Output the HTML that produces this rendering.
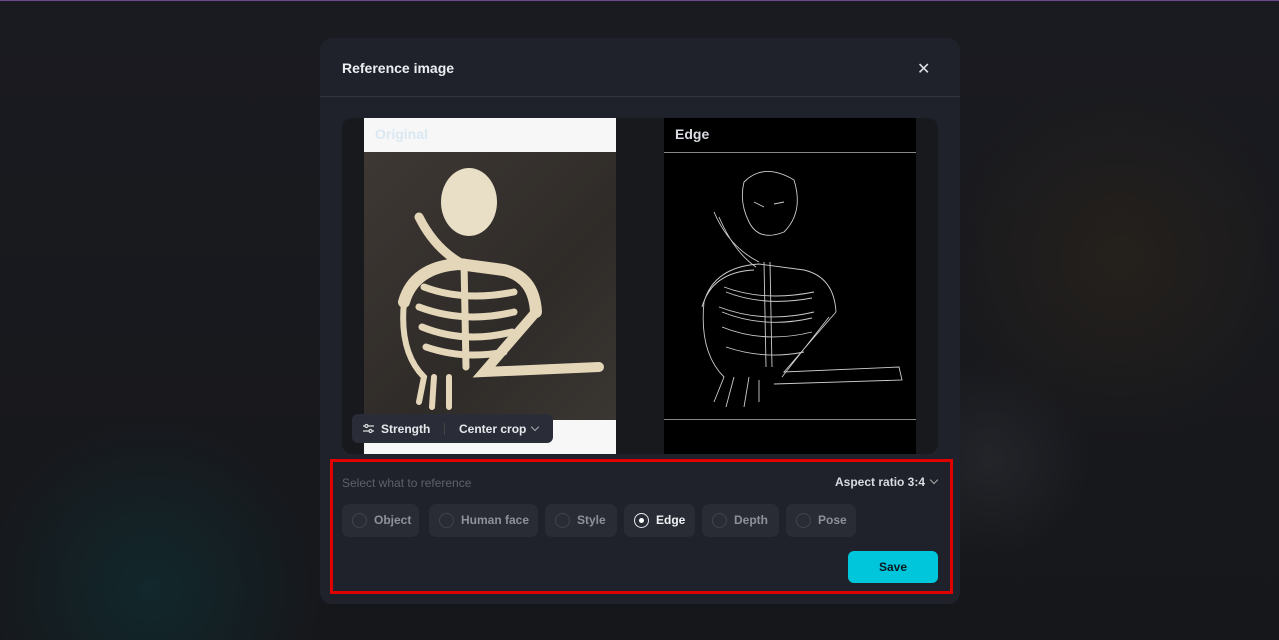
<!DOCTYPE html>
<html><head><style>
*{margin:0;padding:0;box-sizing:border-box}
body{width:1279px;height:640px;overflow:hidden;background:#15161b;font-family:"Liberation Sans",sans-serif;position:relative}
.bg{position:absolute;inset:0;background:radial-gradient(circle at 150px 590px,rgba(16,44,48,.8) 0,rgba(17,50,54,0) 170px),radial-gradient(circle at 1120px 260px,rgba(40,34,27,.8) 0,rgba(43,36,28,0) 180px),radial-gradient(circle at 990px 460px,rgba(40,42,47,.7) 0,rgba(42,44,49,0) 100px),linear-gradient(#1a1b20,#16171b)}
.top{position:absolute;left:0;top:0;width:1279px;height:1px;background:#6a4a8a}
.modal{position:absolute;left:320px;top:38px;width:640px;height:566px;background:#1f222a;border-radius:12px}
.title{position:absolute;left:22px;top:22px;color:#eceef2;font-size:14px;font-weight:bold}
.close{position:absolute;left:597px;top:21px;color:#dfe2e8;font-size:16px}
.hr{position:absolute;left:0;top:58px;width:640px;height:1px;background:#33363f}
.imgs{position:absolute;left:22px;top:80px;width:596px;height:336px;background:#18191d;border-radius:10px;overflow:hidden}
.l{position:absolute;left:22px;top:0;width:252px;height:336px;background:#f7f7f7}
.photo{position:absolute;left:0;top:34px;width:252px;height:268px;background:linear-gradient(135deg,#3e3834,#2f2b28 60%,#3a3632)}
.r{position:absolute;left:322px;top:0;width:252px;height:336px;background:#000}
.lab{position:absolute;left:11px;top:8px;font-size:14px;font-weight:bold}
.pill{position:absolute;left:10px;top:296px;width:201px;height:29px;background:#2a2d37;border-radius:6px;color:#e6e8ec;font-size:12px;font-weight:bold}
.red{position:absolute;left:10px;top:421px;width:623px;height:135px;border:3px solid #e00000}
.chip{position:absolute;top:466px;height:33px;background:#292c35;border-radius:7px;color:#8d919b;font-size:12px;font-weight:bold;line-height:33px;padding-left:32px;white-space:nowrap}
.chip i{position:absolute;left:10px;top:9px;width:15px;height:15px;border:1px solid #40444d;border-radius:50%}
.save{position:absolute;left:528px;top:513px;width:90px;height:32px;background:#00c6dc;border-radius:6px;color:#0b1a20;font-size:12px;font-weight:bold;text-align:center;line-height:32px}
.chev{display:inline-block;width:6px;height:6px;border-right:1.3px solid #aaa;border-bottom:1.3px solid #aaa;transform:rotate(45deg);margin-left:6px;position:relative;top:-3px}
</style></head><body>
<div class="bg"></div><div class="top"></div>
<div class="modal">
<div class="title">Reference image</div>
<div class="close">✕</div>
<div class="hr"></div>
<div class="imgs">
 <div class="l"><div class="photo">
  <svg width="252" height="268" viewBox="0 0 252 268" fill="none" stroke="#e4d6b8" stroke-linecap="round">
   <ellipse cx="105" cy="50" rx="28" ry="34" fill="#e9dfc6" stroke="none"/>
   <path d="M55 65 Q70 95 95 110" stroke-width="9"/>
   <path d="M40 150 Q50 115 95 112 L140 118 Q170 125 172 160" stroke-width="12"/>
   <path d="M100 110 L102 215" stroke-width="7"/>
   <path d="M60 135 Q100 150 150 140 M55 155 Q100 172 150 160 M58 175 Q100 192 148 180 M62 195 Q100 208 140 200" stroke-width="7"/>
   <path d="M172 160 L120 220 L235 215" stroke-width="10"/>
   <path d="M40 150 Q35 200 60 225 L55 250 M70 225 L68 255 M85 225 L85 255" stroke-width="6"/>
  </svg></div>
  <div class="lab" style="color:#d5e6f2;opacity:.85">Original</div></div>
 <div class="r"><div class="lab" style="color:#d8dce2">Edge</div>
  <div style="position:absolute;left:0;top:34px;width:252px;height:1px;background:#888"></div>
  <div style="position:absolute;left:0;top:301px;width:252px;height:1px;background:#888"></div>
  <svg style="position:absolute;left:0;top:34px" width="252" height="268" viewBox="0 0 252 268" fill="none" stroke="#ccc" stroke-width="0.9">
   <path d="M80 30 Q100 10 130 28 Q140 60 120 80 Q95 90 85 70 Q75 50 80 30Z M90 50 L100 55 M110 52 L120 50"/>
   <path d="M50 60 Q65 95 95 110 M55 65 Q70 100 92 115"/>
   <path d="M40 150 Q50 115 95 112 L140 118 Q170 125 172 160 M38 155 Q48 120 90 118"/>
   <path d="M100 110 L102 215 M106 110 L108 215"/>
   <path d="M60 135 Q100 150 150 140 M55 155 Q100 172 150 160 M58 175 Q100 192 148 180 M62 195 Q100 208 140 200 M62 140 Q100 155 148 146 M58 160 Q100 177 148 166"/>
   <path d="M172 160 L120 220 L235 215 L238 228 L110 232 M165 165 L118 225"/>
   <path d="M40 150 Q35 200 60 225 L50 250 M70 225 L62 255 M85 225 L80 255 M95 228 L95 250"/>
  </svg></div>
 <div class="pill">
  <svg style="position:absolute;left:11px;top:9px" width="11" height="11" viewBox="0 0 11 11" stroke="#ddd" fill="none" stroke-width="1.2"><path d="M0 3H11M0 8H11"/><circle cx="3.5" cy="3" r="1.5" fill="#2a2d37"/><circle cx="7.5" cy="8" r="1.5" fill="#2a2d37"/></svg>
  <span style="position:absolute;left:29px;top:8px">Strength</span>
  <span style="position:absolute;left:92px;top:9px;width:1px;height:12px;background:#444"></span>
  <span style="position:absolute;left:107px;top:8px">Center crop<span class="chev"></span></span>
 </div>
</div>
<div class="red"></div>
<div style="position:absolute;left:22px;top:438px;color:#5d616b;font-size:12px">Select what to reference</div>
<div style="position:absolute;left:515px;top:437px;color:#d8dbe0;font-size:12px;font-weight:bold">Aspect ratio 3:4<span class="chev"></span></div>
<div class="chip" style="left:22px;width:77px"><i></i>Object</div>
<div class="chip" style="left:109px;width:109px"><i></i>Human face</div>
<div class="chip" style="left:225px;width:72px"><i></i>Style</div>
<div class="chip" style="left:304px;width:71px;color:#f0f2f5"><i style="border:1.5px solid #e6e8ec"><b style="position:absolute;left:3.5px;top:3.5px;width:5px;height:5px;border-radius:50%;background:#fff"></b></i>Edge</div>
<div class="chip" style="left:382px;width:77px"><i></i>Depth</div>
<div class="chip" style="left:466px;width:70px"><i></i>Pose</div>
<div class="save">Save</div>
</div>
</body></html>
